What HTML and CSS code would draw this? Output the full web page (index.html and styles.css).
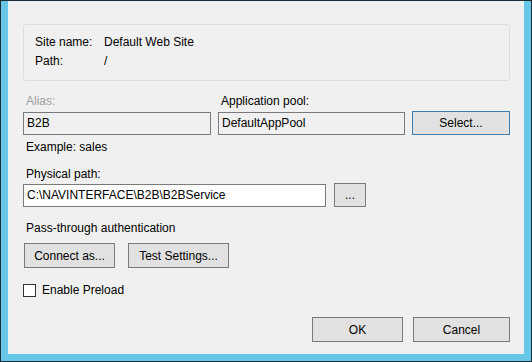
FILE: index.html
```html
<!DOCTYPE html>
<html lang="en">
<head>
    <meta charset="UTF-8">
    <meta name="viewport" content="width=device-width, initial-scale=1.0">
    <title>Edit Application</title>
    <link rel="stylesheet" href="styles.css">
</head>
<body>

    <div class="frame">
        <div class="dialog">

            <!-- Site info -->
            <div class="group">
                <div class="info-row"><span class="info-label">Site name:</span><span>Default Web Site</span></div>
                <div class="info-row"><span class="info-label">Path:</span><span>/</span></div>
            </div>

            <!-- Alias and pool -->
            <div class="pool-grid">
                <div class="field-label disabled">Alias:</div>
                <div class="field-label">Application pool:</div>
                <div></div>
                <div class="textbox readonly">B2B</div>
                <div class="textbox readonly">DefaultAppPool</div>
                <button class="btn btn-default">Select...</button>
            </div>
            <div class="hint">Example: sales</div>

            <!-- Physical path -->
            <div class="field-label section">Physical path:</div>
            <div class="path-row">
                <div class="textbox path-box">C:\NAVINTERFACE\B2B\B2BService</div>
                <button class="btn btn-browse">...</button>
            </div>

            <div class="field-label auth-label">Pass-through authentication</div>
            <div class="auth-row">
                <button class="btn btn-connect">Connect as...</button>
                <button class="btn btn-test">Test Settings...</button>
            </div>

            <label class="check-row">
                <span class="checkbox"></span>
                <span>Enable Preload</span>
            </label>

            <div class="footer">
                <button class="btn btn-ok">OK</button>
                <button class="btn btn-cancel">Cancel</button>
            </div>

        </div>
    </div>

</body>
</html>
```

FILE: styles.css
```css
* {
    box-sizing: border-box;
}

body {
    margin: 0;
    font-family: "Liberation Sans", Arial, sans-serif;
    font-size: 12px;
    color: #000;
    background: #1c2b36;
}

.frame {
    width: 532px;
    height: 362px;
    padding: 1px 1px 1px 1px;
    background: #1c2b36;
}

.dialog {
    height: 100%;
    padding: 23px 14px 0 15px;
    background: #f0f0f0;
    border-style: solid;
    border-color: #66c8e6;
    border-width: 0 7px 7px 7px;
    box-shadow: inset 1px 0 0 #e6f4f9, inset -1px 0 0 #e6f4f9, inset 0 -1px 0 #e6f4f9;
}

.group {
    height: 57px;
    padding: 8px 11px 0 11px;
    border: 1px solid #dcdcdc;
    border-radius: 3px;
}

.info-row {
    display: flex;
    line-height: 19px;
}

.info-label {
    width: 69px;
}

.pool-grid {
    display: grid;
    grid-template-columns: 188px 187px 98px;
    grid-template-rows: 15px auto;
    column-gap: 7px;
    row-gap: 2px;
    margin-top: 13px;
    align-items: end;
}

.field-label {
    line-height: 15px;
    padding-left: 3px;
}

.field-label.disabled {
    color: #a0a0a0;
}

.textbox {
    height: 23px;
    line-height: 21px;
    padding-left: 3px;
    border: 1px solid #7a7a7a;
    background: #fff;
    white-space: nowrap;
}

.textbox.readonly {
    background: #f0f0f0;
}

.btn {
    height: 25px;
    padding: 0;
    font-family: inherit;
    font-size: 12px;
    color: #000;
    background: #e1e1e1;
    border: 1px solid #7a7a7a;
}

.btn-default {
    height: 24px;
    border-color: #3c7fb1;
}

.hint {
    margin-top: 5px;
    padding-left: 3px;
    line-height: 15px;
}

.section {
    margin-top: 12px;
}

.path-row {
    display: flex;
    align-items: flex-end;
    margin-top: 1px;
}

.path-box {
    width: 303px;
}

.btn-browse {
    width: 32px;
    height: 24px;
    margin-left: 8px;
}

.auth-label {
    margin-top: 14px;
}

.auth-row {
    display: flex;
    gap: 13px;
    margin-top: 7px;
    padding-left: 1px;
}

.btn-connect {
    width: 91px;
}

.btn-test {
    width: 101px;
}

.check-row {
    display: flex;
    align-items: center;
    gap: 6px;
    margin-top: 16px;
    line-height: 13px;
}

.checkbox {
    width: 13px;
    height: 13px;
    border: 1px solid #333;
    background: #fff;
}

.footer {
    display: flex;
    justify-content: flex-end;
    gap: 10px;
    margin-top: 20px;
}

.btn-ok {
    width: 91px;
}

.btn-cancel {
    width: 97px;
}
```
